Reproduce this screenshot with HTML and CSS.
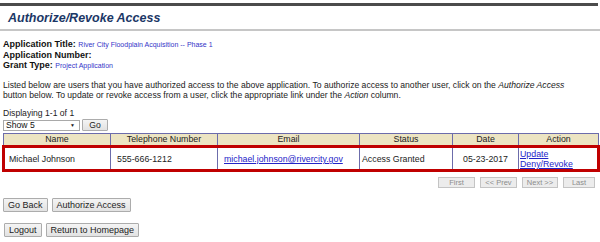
FILE: index.html
```html
<!DOCTYPE html>
<html>
<head>
<meta charset="utf-8">
<link rel="stylesheet" href="styles.css">
</head>
<body>
<div class="page">
  <div class="topbar"></div>
  <h1 class="title">Authorize/Revoke Access</h1>
  <hr class="rule">
  <div class="info">
    <div><b>Application Title:</b> <span class="val">River City Floodplain Acquisition -- Phase 1</span></div>
    <div><b>Application Number:</b></div>
    <div><b>Grant Type:</b> <span class="val">Project Application</span></div>
  </div>
  <p class="intro">Listed below are users that you have authorized access to the above application. To authorize access to another user, click on the <i>Authorize Access</i> button below. To update or revoke access from a user, click the appropriate link under the <i>Action</i> column.</p>
  <div class="displaying">Displaying 1-1 of 1</div>
  <div class="showrow">
    <span class="selwrap">
      <select class="sel"><option>Show 5</option><option>Show 10</option></select>
      <span class="arrow">&#9660;</span>
    </span>
    <button class="btn go">Go</button>
  </div>
  <table class="grid">
    <colgroup>
      <col class="c1"><col class="c2"><col class="c3"><col class="c4"><col class="c5"><col class="c6">
    </colgroup>
    <thead>
      <tr><th>Name</th><th>Telephone Number</th><th>Email</th><th>Status</th><th>Date</th><th>Action</th></tr>
    </thead>
    <tbody>
      <tr class="hl">
        <td class="name">Michael Johnson</td>
        <td class="phone">555-666-1212</td>
        <td class="email"><a href="#">michael.johnson@rivercity.gov</a></td>
        <td class="status">Access Granted</td>
        <td class="date">05-23-2017</td>
        <td class="action"><a href="#">Update</a><br><a href="#">Deny/Revoke</a></td>
      </tr>
    </tbody>
  </table>
  <div class="pager">
    <button class="pbtn w-first" disabled>First</button>
    <button class="pbtn w-prev" disabled>&lt;&lt; Prev</button>
    <button class="pbtn w-next" disabled>Next &gt;&gt;</button>
    <button class="pbtn w-last" disabled>Last</button>
  </div>
  <div class="actions row1">
    <button class="btn big">Go Back</button>
    <button class="btn big">Authorize Access</button>
  </div>
  <div class="actions row2">
    <button class="btn big">Logout</button>
    <button class="btn big">Return to Homepage</button>
  </div>
</div>
</body>
</html>
```
FILE: styles.css
```css
html, body {
  margin: 0;
  padding: 0;
  background: #ffffff;
}
body {
  font-family: "Liberation Sans", Arial, sans-serif;
  font-size: 9px;
  color: #222222;
}
.page {
  width: 600px;
  display: flex;
  flex-direction: column;
}
.topbar {
  margin: 3px 2px 0 0;
  height: 3px;
  background: #4b4b4b;
}
.title {
  margin: 4px 0 0 8px;
  font-size: 12.5px;
  line-height: 16px;
  font-style: italic;
  font-weight: bold;
  color: #1b3766;
}
.rule {
  margin: 3px 0 0 0;
  height: 2px;
  border: 0;
  background: #c6c6c6;
  width: 100%;
}
.info {
  margin: 8px 0 0 3px;
  line-height: 10px;
  font-size: 9px;
  color: #111111;
}
.info .val {
  font-size: 7px;
  color: #3434c8;
}
.intro {
  margin: 9px 0 0 3px;
  width: 578px;
  font-size: 8.6px;
  line-height: 10px;
  color: #222222;
}
.displaying {
  margin: 8px 0 0 3px;
  font-size: 8.6px;
  line-height: 10px;
}
.showrow {
  margin: 1px 0 0 3px;
  display: flex;
  align-items: center;
  gap: 2px;
  height: 12px;
}
.selwrap {
  position: relative;
  display: inline-block;
  width: 77px;
  height: 11px;
}
.sel {
  appearance: none;
  -webkit-appearance: none;
  width: 77px;
  height: 11px;
  margin: 0;
  padding: 0 0 0 2px;
  border: 1px solid #a9a9a9;
  background: #ffffff;
  font-family: "Liberation Sans", Arial, sans-serif;
  font-size: 8.6px;
  line-height: 9px;
  color: #111111;
  box-sizing: border-box;
}
.arrow {
  position: absolute;
  right: 5px;
  top: 2px;
  font-size: 5px;
  line-height: 7px;
  color: #222222;
  pointer-events: none;
}
.btn {
  font-family: "Liberation Sans", Arial, sans-serif;
  margin: 0;
  padding: 0 5px;
  border: 1px solid #acacac;
  border-radius: 1px;
  background: linear-gradient(#f4f4f4, #e2e2e2);
  color: #222222;
  box-sizing: border-box;
}
.go {
  width: 26px;
  height: 12px;
  font-size: 8.6px;
  line-height: 10px;
}
.grid {
  margin: 2px 0 0 2px;
  width: 595px;
  border-collapse: collapse;
  table-layout: fixed;
  font-size: 8.8px;
}
.c1 { width: 107px; }
.c2 { width: 107px; }
.c3 { width: 142px; }
.c4 { width: 93px; }
.c5 { width: 66px; }
.c6 { width: 80px; }
.grid th, .grid td {
  border: 1px solid #6c6cab;
}
.grid th {
  background: #ece4c2;
  font-weight: normal;
  height: 11px;
  padding: 0;
  line-height: 11px;
  text-align: center;
  color: #222222;
}
.grid td {
  padding: 1px 4px 0;
  line-height: 10px;
  color: #222222;
  vertical-align: middle;
}
.grid tr.hl td {
  border-top: 3px solid #c00000;
  border-bottom: 3px solid #c00000;
}
.grid tr.hl td:first-child {
  border-left: 3px solid #c00000;
}
.grid tr.hl td:last-child {
  border-right: 3px solid #c00000;
}
.grid a {
  color: #2323c8;
  text-decoration: underline;
}
.grid td.name { padding-left: 4px; }
.grid td.phone { padding-left: 6px; }
.grid td.email { padding-left: 6px; }
.grid td.status { padding-left: 2px; }
.grid td.date { text-align: center; }
.grid td.action { padding-left: 1px; }
.pager {
  margin: 5px 5px 0 0;
  display: flex;
  justify-content: flex-end;
  gap: 5px;
  height: 11px;
}
.pbtn {
  font-family: "Liberation Sans", Arial, sans-serif;
  margin: 0;
  padding: 0;
  height: 11px;
  font-size: 7.5px;
  line-height: 9px;
  border: 1px solid #c4c4c4;
  background: #ececec;
  color: #8c8c8c;
  box-sizing: border-box;
}
.w-first { width: 37px; }
.w-prev { width: 37px; }
.w-next { width: 36px; }
.w-last { width: 32px; }
.actions {
  display: flex;
  gap: 4px;
}
.row1 {
  margin: 10px 0 0 3px;
}
.row2 {
  margin: 11px 0 0 4px;
}
.big {
  height: 14px;
  font-size: 9px;
  line-height: 12px;
  padding: 0 4px;
}
```
